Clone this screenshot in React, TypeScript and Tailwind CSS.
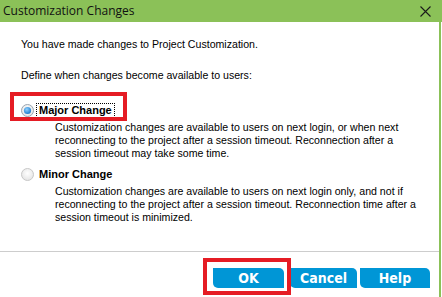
import React from 'react';

const Radio = ({ checked }: { checked: boolean }) => (
  <svg width="13" height="13" viewBox="0 0 13 13" className="shrink-0">
    <defs>
      <radialGradient id="rfill" cx="50%" cy="40%" r="60%">
        <stop offset="0%" stopColor="#ffffff" />
        <stop offset="100%" stopColor="#e4e4e4" />
      </radialGradient>
      <radialGradient id="rdot" cx="40%" cy="35%" r="70%">
        <stop offset="0%" stopColor="#8fd0ff" />
        <stop offset="100%" stopColor="#1275c8" />
      </radialGradient>
    </defs>
    <circle cx="6.5" cy="6.5" r="6" fill="url(#rfill)" stroke={checked ? '#9aa5b1' : '#c8c8c8'} strokeWidth="1" />
    {checked && <circle cx="6.5" cy="6.5" r="3.6" fill="url(#rdot)" />}
  </svg>
);

const Option = ({ label, checked, focused, lines }: { label: string; checked: boolean; focused?: boolean; lines: string[] }) => (
  <div>
    <div className="flex items-center h-[15px]">
      <Radio checked={checked} />
      <span
        className={`ml-[2px] px-[2px] text-[11px] leading-[13px] font-bold border ${focused ? 'border-dotted border-black' : 'border-transparent'}`}
      >
        {label}
      </span>
    </div>
    <div className="mt-[3px] ml-[34px] leading-[13px]">
      {lines.map(l => (
        <div key={l} className="whitespace-nowrap">{l}</div>
      ))}
    </div>
  </div>
);

export default function App() {
  return (
    <div className="relative w-[442px] h-[297px] bg-white overflow-hidden text-[10.6px] text-black font-['Liberation_Sans',Arial,sans-serif]">
      {/* title bar */}
      <div className="h-[22px] bg-[#8bc158] flex items-center justify-between pl-[3px] pr-[11px]">
        <span className="text-[12px] text-[#111] font-['Open_Sans','Noto_Sans',sans-serif] leading-none">Customization Changes</span>
        <svg width="11" height="11" viewBox="0 0 11 11">
          <path d="M0.5 0.5 L10.5 10.5 M10.5 0.5 L0.5 10.5" stroke="#1a1a1a" strokeWidth="1.1" />
        </svg>
      </div>

      <div className="flex h-[275px]">
        <div className="w-[439px] flex flex-col">
          <div className="pl-[21px] pt-[16px]">
            <p className="leading-[13px]">You have made changes to Project Customization.</p>
            <p className="leading-[13px] mt-[18px]">Define when changes become available to users:</p>

            <div className="mt-[21px]">
              <Option
                label="Major Change"
                checked
                focused
                lines={[
                  'Customization changes are available to users on next login, or when next',
                  'reconnecting to the project after a session timeout. Reconnection after a',
                  'session timeout may take some time.',
                ]}
              />
            </div>
            <div className="mt-[7px]">
              <Option
                label="Minor Change"
                checked={false}
                lines={[
                  'Customization changes are available to users on next login only, and not if',
                  'reconnecting to the project after a session timeout. Reconnection time after a',
                  'session timeout is minimized.',
                ]}
              />
            </div>
          </div>

          <div className="mt-[27px] h-px bg-[#cdcdcd]" />

          <div className="mt-[16px] flex justify-end pr-[9px] text-white font-bold text-[14px] font-['Liberation_Sans_Narrow','DejaVu_Sans_Condensed','Liberation_Sans',sans-serif]">
            <button className="w-[71px] h-[20px] bg-[#0096d6] rounded-tr-[5px] rounded-bl-[5px] leading-none">OK</button>
            <button className="ml-[6px] w-[67px] h-[20px] bg-[#0096d6] rounded-tr-[5px] rounded-bl-[5px] leading-none">Cancel</button>
            <button className="ml-[3px] w-[70px] h-[20px] bg-[#0096d6] rounded-tr-[5px] rounded-bl-[5px] leading-none">Help</button>
          </div>
        </div>
        <div className="w-[2px] bg-[#8bc158]" />
      </div>

      {/* red annotation boxes */}
      <div className="absolute left-[10px] top-[92px] w-[117px] h-[29px] border-[4px] border-[#e51c24]" />
      <div className="absolute left-[203px] top-[258px] w-[88px] h-[37px] border-[4px] border-[#e51c24]" />
    </div>
  );
}
